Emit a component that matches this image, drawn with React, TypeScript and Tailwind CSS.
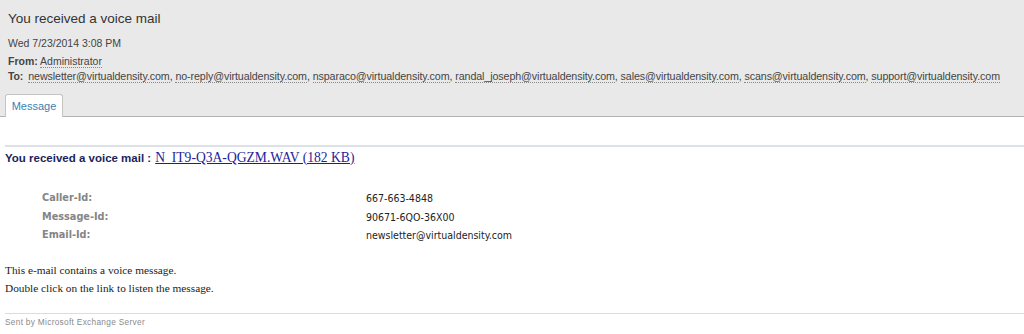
import React from "react";

const emails = [
  "newsletter@virtualdensity.com",
  "no-reply@virtualdensity.com",
  "nsparaco@virtualdensity.com",
  "randal_joseph@virtualdensity.com",
  "sales@virtualdensity.com",
  "scans@virtualdensity.com",
  "support@virtualdensity.com",
];

export default function App() {
  return (
    <div className="w-[1024px] h-[334px] bg-white overflow-hidden font-['Liberation_Sans',Arial,sans-serif]">
      <div className="bg-[#e9e9e9] border-b border-[#b4b4b4] h-[117px] flex flex-col">
        <div className="pl-2 pt-[10px] text-[13.5px] leading-[17px] text-[#333]">You received a voice mail</div>
        <div className="pl-2 pt-[10px] text-[10.5px] leading-[13px] text-[#444]">Wed 7/23/2014 3:08 PM</div>
        <div className="pl-2 pt-[5px] text-[10.5px] leading-[13px] text-[#444]">
          <span className="font-bold">From:</span>{" "}
          <span className="border-b border-dotted border-[#888]">Administrator</span>
        </div>
        <div className="pl-2 pt-[2px] text-[10.7px] leading-[13px] tracking-[-0.1px] text-[#444] whitespace-nowrap">
          <span className="font-bold text-[10.5px]">To:</span>
          <span className="ml-[5px]" />
          {emails.map((e, i) => (
            <React.Fragment key={e}>
              <span className="border-b border-dotted border-[#888]">{e}</span>
              {i < emails.length - 1 ? ", " : ""}
            </React.Fragment>
          ))}
        </div>
        <div className="mt-auto pl-[5px] flex">
          <div className="h-[23px] w-[58px] -mb-px bg-white border border-b-0 border-[#c4c4c4] rounded-t-[3px] flex items-center justify-center text-[11px] text-[#3b7fb4]">
            Message
          </div>
        </div>
      </div>
      <div className="pl-[5px]">
        <div className="mt-[28px] h-[2px] bg-[#dbe1e6]" />
        <div className="mt-[1px] flex items-baseline whitespace-nowrap">
          <span className="text-[11.5px] font-bold text-[#1b1f5c]">You received a voice mail :</span>
          <span className="ml-[4px] font-['Liberation_Serif','Times_New_Roman',serif] text-[13.6px] text-[#1d1d9a] underline">N_IT9-Q3A-QGZM.WAV (182 KB)</span>
        </div>
        <div className="mt-[21px] flex flex-col text-[11px] leading-[18.5px]">
          {[
            ["Caller-Id:", "667-663-4848"],
            ["Message-Id:", "90671-6QO-36X00"],
            ["Email-Id:", "newsletter@virtualdensity.com"],
          ].map(([k, v]) => (
            <div key={k} className="flex">
              <div className="w-[361px] pl-[37px] font-bold text-[#858585] font-['DejaVu_Sans_Condensed','DejaVu_Sans',sans-serif] text-[10.8px]">{k}</div>
              <div className="text-[#222] font-['DejaVu_Sans_Condensed','DejaVu_Sans',sans-serif] text-[10.5px]">{v}</div>
            </div>
          ))}
        </div>
        <div className="mt-[16px] font-['Liberation_Serif','Times_New_Roman',serif] text-[11.3px] leading-[18px] text-[#222]">
          <div>This e-mail contains a voice message.</div>
          <div>Double click on the link to listen the message.</div>
        </div>
        <div className="mt-[16px] h-px bg-[#dcdcdc]" />
        <div className="pt-[2px] text-[8.3px] text-[#8a8a8a] tracking-[0.3px]">Sent by Microsoft Exchange Server</div>
      </div>
    </div>
  );
}
